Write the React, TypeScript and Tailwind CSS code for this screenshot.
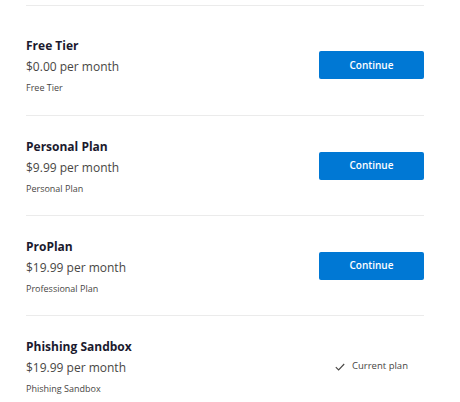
import { FC } from "react";

type Plan = {
  name: string;
  price: string;
  description: string;
  current?: boolean;
};

const plans: Plan[] = [
  { name: "Free Tier", price: "$0.00 per month", description: "Free Tier" },
  { name: "Personal Plan", price: "$9.99 per month", description: "Personal Plan" },
  { name: "ProPlan", price: "$19.99 per month", description: "Professional Plan" },
  {
    name: "Phishing Sandbox",
    price: "$19.99 per month",
    description: "Phishing Sandbox",
    current: true,
  },
];

const PlanRow: FC<{ plan: Plan; first?: boolean }> = ({ plan, first }) => (
  <div
    className={`flex h-[100px] items-center justify-between ${
      first ? "" : "border-t border-[#ebebeb]"
    }`}
  >
    <div className="flex flex-col pt-[2px]">
      <span className="text-[12px] leading-[18px] font-bold text-[#1b1a2e]">
        {plan.name}
      </span>
      <span className="mt-[3px] text-[12px] leading-[18px] text-[#484644]">
        {plan.price}
      </span>
      <span className="mt-[5px] text-[9px] leading-[14px] text-[#484644]">
        {plan.description}
      </span>
    </div>
    {plan.current ? (
      <div className="flex w-[105px] items-center justify-center gap-[7px] pt-[2px] text-[9.5px] text-[#484644]">
        <svg width="10" height="8" viewBox="0 0 10 8" fill="none">
          <path d="M0.8 4.2 L3.6 7 L9.2 1" stroke="#484644" strokeWidth="1.1" />
        </svg>
        <span>Current plan</span>
      </div>
    ) : (
      <button className="h-[28px] w-[105px] rounded-[2px] bg-[#0078d4] text-[10px] font-semibold text-white">
        Continue
      </button>
    )}
  </div>
);

const App: FC = () => {
  return (
    <div className="min-h-[402px] bg-white font-['Open_Sans',sans-serif]">
      <div className="mx-[26px] w-[398px] pt-[5px]">
        <div className="h-[10px] border-t border-[#ebebeb]" />
        {plans.map((plan, i) => (
          <PlanRow key={plan.name} plan={plan} first={i === 0} />
        ))}
      </div>
    </div>
  );
};

export default App;
